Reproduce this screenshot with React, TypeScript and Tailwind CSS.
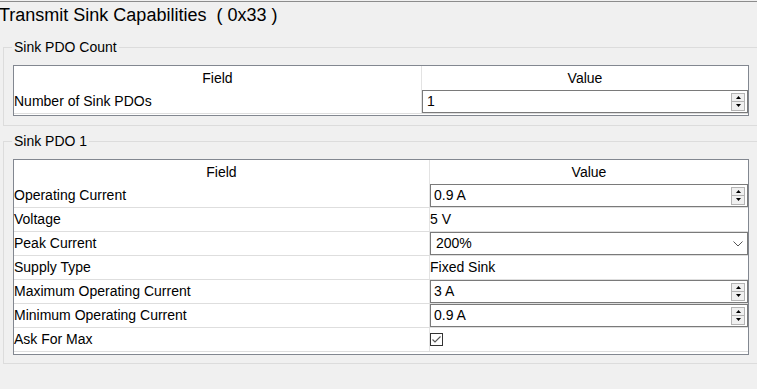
import React from "react";

function Spinner() {
  return (
    <div className="flex flex-col mr-[2px]">
      <div className="w-[14px] h-[9px] border border-[#b4b4b4] bg-[#f0f0f0] flex items-center justify-center">
        <svg width="5" height="3" viewBox="0 0 5 3">
          <path d="M2.5 0L5 3H0z" fill="#000" />
        </svg>
      </div>
      <div className="w-[14px] h-[9px] border border-t-0 border-[#b4b4b4] bg-[#f0f0f0] flex items-center justify-center">
        <svg width="5" height="3" viewBox="0 0 5 3">
          <path d="M0 0H5L2.5 3z" fill="#000" />
        </svg>
      </div>
    </div>
  );
}

function SpinBox({ value, pad = "pl-[3px]" }: { value: string; pad?: string }) {
  return (
    <div className={`h-full w-full border border-[#7a7a7a] bg-white flex items-center ${pad}`}>
      <span className="flex-1">{value}</span>
      <Spinner />
    </div>
  );
}

function DropDown({ value }: { value: string }) {
  return (
    <div className="h-full w-full border border-[#7a7a7a] bg-white flex items-center pl-[5px] pr-[4px]">
      <span className="flex-1">{value}</span>
      <svg width="10" height="6" viewBox="0 0 10 6">
        <path d="M0.5 0.5L5 5L9.5 0.5" fill="none" stroke="#555" strokeWidth="1" />
      </svg>
    </div>
  );
}

function Check() {
  return (
    <svg width="13" height="13" viewBox="0 0 13 13">
      <rect x="0.5" y="0.5" width="12" height="12" fill="#fff" stroke="#333" />
      <path d="M2.5 6.5L5 9L10.5 3.5" fill="none" stroke="#555" strokeWidth="1.1" />
    </svg>
  );
}

type Row = { field: string; value: React.ReactNode };

function Table({ rows, fieldW, padB }: { rows: Row[]; fieldW: string; padB: string }) {
  return (
    <div className={`w-[736px] border border-[#828790] bg-white ${padB}`}>
      <div className="flex h-[24px]">
        <div className={`${fieldW} border-r border-[#e3e3e3] flex items-center justify-center`}>Field</div>
        <div className="flex-1 flex items-center justify-center">Value</div>
      </div>
      {rows.map((r, i) => (
        <div key={i} className="flex h-[24px] border-b border-[#dedede]">
          <div className={`${fieldW} border-r border-[#e3e3e3] flex items-center`}>{r.field}</div>
          <div className="flex-1 flex items-center">{r.value}</div>
        </div>
      ))}
    </div>
  );
}

function Group({ title, children, className }: { title: string; children: React.ReactNode; className: string }) {
  return (
    <div className={`relative ml-[3px] w-[770px] border border-[#dcdcdc] pl-[9px] pt-[17px] ${className}`}>
      <div className="absolute left-[8px] top-[-9px] px-[2px] bg-[#f0f0f0] leading-[16px]">{title}</div>
      {children}
    </div>
  );
}

export default function App() {
  return (
    <div className="w-[757px] h-[389px] overflow-hidden bg-[#f0f0f0] pt-[1px] text-[14px] text-black font-[family-name:'Liberation_Sans',Arial,sans-serif]">
      <div className="h-px bg-[#8c8c8c]" />
      <div className="ml-[-1px] text-[18px] leading-[26px] whitespace-pre">Transmit Sink Capabilities  ( 0x33 )</div>
      <div className="mt-[19px]">
        <Group title="Sink PDO Count" className="pb-[9px]">
          <Table
            fieldW="w-[408px]"
            padB="pb-[1px]"
            rows={[{ field: "Number of Sink PDOs", value: <SpinBox value="1" pad="pl-[4px]" /> }]}
          />
        </Group>
      </div>
      <div className="mt-[15px]">
        <Group title="Sink PDO 1" className="pb-[8px]">
          <Table
            fieldW="w-[416px]"
            padB="pb-[2px]"
            rows={[
              { field: "Operating Current", value: <SpinBox value="0.9 A" /> },
              { field: "Voltage", value: <span>5 V</span> },
              { field: "Peak Current", value: <DropDown value="200%" /> },
              { field: "Supply Type", value: <span>Fixed Sink</span> },
              { field: "Maximum Operating Current", value: <SpinBox value="3 A" /> },
              { field: "Minimum Operating Current", value: <SpinBox value="0.9 A" /> },
              { field: "Ask For Max", value: <Check /> },
            ]}
          />
        </Group>
      </div>
    </div>
  );
}
